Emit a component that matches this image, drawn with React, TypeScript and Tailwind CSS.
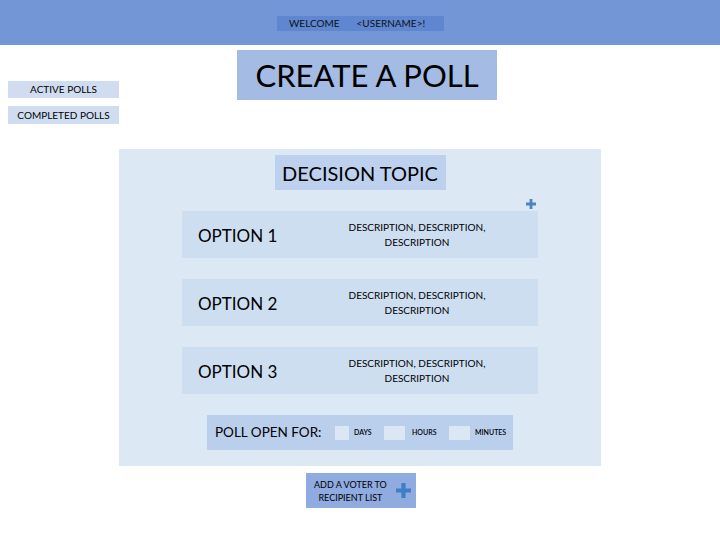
const font = { fontFamily: "Lato, 'Liberation Sans', sans-serif" };

function PlusMark({ className }: { className?: string }) {
  return (
    <svg viewBox="0 0 10 10" className={className}>
      <path d="M3.6 0h2.8v3.6H10v2.8H6.4V10H3.6V6.4H0V3.6h3.6z" fill="currentColor" />
    </svg>
  );
}

const options = ["OPTION 1", "OPTION 2", "OPTION 3"];

export default function App() {
  return (
    <div className="w-[720px] h-[540px] bg-white text-black" style={font}>
      {/* Header */}
      <header className="h-[45px] bg-[#7397d6] flex items-center justify-center">
        <div className="ml-[1px] mt-[2px] w-[167px] h-[15px] bg-[#5e86d1] flex items-center text-[10px] text-[#111]">
          <span className="ml-[12px]">WELCOME</span>
          <span className="ml-[17px]">&lt;USERNAME&gt;!</span>
        </div>
      </header>

      {/* Sidebar + title */}
      <div className="flex">
        <nav className="ml-[8px] mt-[36px] w-[111px] flex flex-col gap-[8px] text-[10px]">
          <button className="h-[17px] bg-[#d0ddf1] flex items-center justify-center">ACTIVE POLLS</button>
          <button className="h-[18px] bg-[#d0ddf1] flex items-center justify-center">COMPLETED POLLS</button>
        </nav>
        <div className="ml-[118px] mt-[5px] w-[260px] h-[50px] bg-[#a4bbe3] flex items-center justify-center text-[31px] leading-none">
          CREATE A POLL
        </div>
      </div>

      {/* Main panel */}
      <main className="ml-[119px] mt-[25px] w-[482px] h-[317px] bg-[#dde8f5] flex flex-col items-center pt-[6px]">
        <div className="w-[171px] h-[35px] bg-[#bdd1ee] flex items-center justify-center text-[20px]">
          DECISION TOPIC
        </div>

        <div className="w-[356px] mt-[9px] h-[10px] flex justify-end pr-[2px]">
          <PlusMark className="w-[10px] h-[10px] text-[#4d82c2]" />
        </div>

        <div className="mt-[2px] flex flex-col gap-[21px]">
          {options.map((o) => (
            <div key={o} className="w-[356px] h-[47px] bg-[#cddef1] flex items-center">
              <div className="w-[165px] pl-[16px] pt-[2px] text-[17px]">{o}</div>
              <div className="w-[140px] text-center text-[10px] leading-[15px]">
                DESCRIPTION, DESCRIPTION,
                <br />
                DESCRIPTION
              </div>
            </div>
          ))}
        </div>

        <div className="mt-[21px] w-[306px] h-[35px] bg-[#bacfec] flex items-center">
          <span className="w-[128px] pl-[8px] text-[13.5px]">POLL OPEN FOR:</span>
          <span className="w-[14px] h-[14px] bg-[#dce7f4]" />
          <span className="w-[35px] pl-[5px] text-[7px] font-semibold">DAYS</span>
          <span className="w-[21px] h-[14px] bg-[#dce7f4]" />
          <span className="w-[44px] pl-[7px] text-[7px] font-semibold">HOURS</span>
          <span className="w-[21px] h-[14px] bg-[#dce7f4]" />
          <span className="pl-[5px] text-[7px] font-semibold">MINUTES</span>
        </div>
      </main>

      <div className="ml-[306px] mt-[7px] w-[110px] h-[35px] bg-[#8fabe0] flex items-center">
        <div className="ml-[8px] text-[9px] leading-[13px] text-center">
          ADD A VOTER TO
          <br />
          RECIPIENT LIST
        </div>
        <PlusMark className="ml-[9px] w-[15px] h-[15px] text-[#3f7fc6]" />
      </div>
    </div>
  );
}
